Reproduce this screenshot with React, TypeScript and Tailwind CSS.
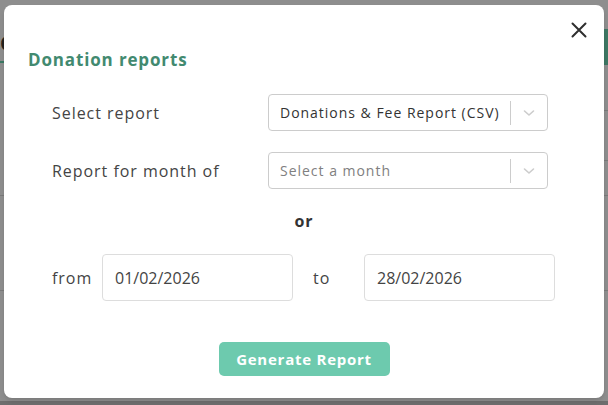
import React from "react";

const font = { fontFamily: '"Open Sans", "DejaVu Sans", sans-serif' };

function Chevron() {
  return (
    <svg width="20" height="20" viewBox="0 0 20 20" className="text-[#cccccc]">
      <path d="M5.5 8 L10 12 L14.5 8" fill="none" stroke="currentColor" strokeWidth="1.6" strokeLinecap="round" strokeLinejoin="round" />
    </svg>
  );
}

function Select({ value, placeholder }: { value?: string; placeholder?: string }) {
  return (
    <div className="w-[280px] h-[37px] border border-[#cccccc] rounded-[4px] flex items-center bg-white">
      <div className={`flex-1 pl-[11px] text-[14px] tracking-[0.07em] ${value ? "text-[#333333]" : "text-[#808080]"}`}>
        {value ?? placeholder}
      </div>
      <div className="w-px h-[24px] bg-[#cccccc]" />
      <div className="w-[36px] flex items-center justify-center">
        <Chevron />
      </div>
    </div>
  );
}

export default function App() {
  return (
    <div className="relative w-[608px] h-[405px] overflow-hidden bg-[#8e8e8e]" style={font}>
      {/* background page slivers */}
      <div className="absolute left-0 top-[28px] text-[26px] font-bold text-[#222] leading-none">o</div>
      <div className="absolute left-0 top-[61px] w-[12px] h-[2px] bg-[#3b7a64]" />
      <div className="absolute left-0 top-[195px] w-[608px] h-px bg-[#7a7a7a]" />
      <div className="absolute left-0 top-[290px] w-[608px] h-px bg-[#7a7a7a]" />
      <div className="absolute right-0 top-[29px] w-[8px] h-[36px] bg-[#3e7764]" />
      <div className="absolute right-0 top-[110px] w-[8px] h-px bg-[#7a7a7a]" />
      <div className="absolute right-0 top-[160px] w-[8px] h-px bg-[#7a7a7a]" />
      <div className="absolute left-0 bottom-0 w-[608px] h-[4px] bg-[#6e6e6e]" />

      {/* modal */}
      <div className="absolute left-[4px] top-[5px] w-[600px] h-[393px] bg-white rounded-[8px] shadow-md">
        <button className="absolute right-[16px] top-[16px] w-[18px] h-[18px] flex items-center justify-center">
          <svg width="16" height="16" viewBox="0 0 16 16">
            <path d="M1.5 1.5 L14.5 14.5 M14.5 1.5 L1.5 14.5" stroke="#2f2f2f" strokeWidth="2" strokeLinecap="round" />
          </svg>
        </button>
        <div className="pt-[43px] pl-[24px]">
          <h2 className="text-[17px] leading-[24px] font-bold tracking-[0.05em] text-[#428a70]">Donation reports</h2>
        </div>

        <div className="pl-[48px] mt-[22px] flex items-center">
          <div className="w-[216px] text-[16px] tracking-[0.06em] text-[#444444]">Select report</div>
          <Select value="Donations & Fee Report (CSV)" />
        </div>
        <div className="pl-[48px] mt-[21px] flex items-center">
          <div className="w-[216px] text-[16px] tracking-[0.06em] text-[#444444]">Report for month of</div>
          <Select placeholder="Select a month" />
        </div>

        <div className="mt-[22px] text-center text-[16px] leading-[20px] font-bold tracking-[0.05em] text-[#333333]">or</div>

        <div className="pl-[48px] mt-[23px] flex items-center">
          <div className="w-[50px] text-[16px] tracking-[0.06em] text-[#444444]">from</div>
          <div className="w-[191px] h-[47px] border border-[#dddddd] rounded-[4px] flex items-center pl-[12px] text-[16px] text-[#444444]">
            01/02/2026
          </div>
          <div className="w-[71px] pl-[20px] text-[16px] tracking-[0.06em] text-[#444444]">to</div>
          <div className="w-[191px] h-[47px] border border-[#dddddd] rounded-[4px] flex items-center pl-[12px] text-[16px] text-[#444444]">
            28/02/2026
          </div>
        </div>

        <div className="mt-[41px] flex justify-center">
          <button className="w-[171px] h-[34px] rounded-[5px] bg-[#6dcaae] text-white font-bold text-[15px] tracking-[0.05em]">
            Generate Report
          </button>
        </div>
      </div>
    </div>
  );
}
